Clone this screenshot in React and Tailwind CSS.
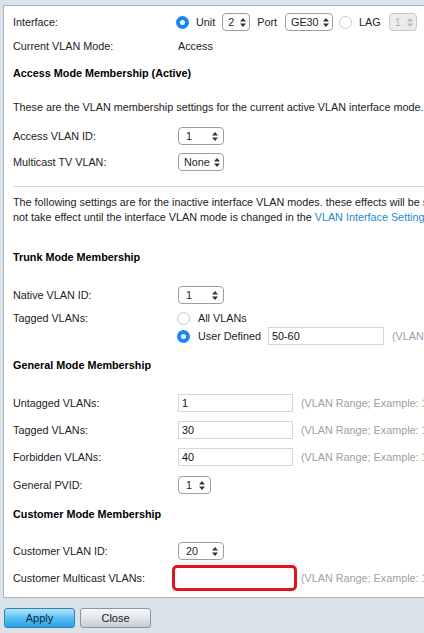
import React from "react";

const font = { fontFamily: '"Liberation Sans", Arial, sans-serif' };

function Arrows({ color = "#333" }) {
  return (
    <svg width="6" height="9" viewBox="0 0 6 9" className="shrink-0">
      <path d="M3 0 L6 3.5 L0 3.5 Z" fill={color} />
      <path d="M3 9 L6 5.5 L0 5.5 Z" fill={color} />
    </svg>
  );
}

function Select({ value, w, disabled, tight }) {
  return (
    <div
      className={
        "flex items-center justify-between h-[18px] rounded-[4px] border " +
        (tight ? "pl-[5px] pr-[3px] " : "pl-[7px] pr-[5px] ") +
        (disabled
          ? "bg-[#ececec] border-[#c8c8c8] text-[#b5b5b5]"
          : "bg-white border-[#9e9e9e] text-[#1e1e1e]")
      }
      style={{ width: w }}
    >
      <span>{value}</span>
      <Arrows color={disabled ? "#b8b8b8" : "#333"} />
    </div>
  );
}

function Radio({ on }) {
  return on ? (
    <div className="w-[13px] h-[13px] rounded-full bg-[#1b86f2] flex items-center justify-center shrink-0">
      <div className="w-[5px] h-[5px] rounded-full bg-white" />
    </div>
  ) : (
    <div className="w-[13px] h-[13px] rounded-full bg-white border border-[#c9c9c9] shrink-0" />
  );
}

function TextInput({ value, w = 115 }) {
  return (
    <div
      className="h-[18px] border border-[#d6d6d6] bg-white flex items-center pl-[3px] text-[#111]"
      style={{ width: w }}
    >
      {value}
    </div>
  );
}

function Row({ label, children, className = "" }) {
  return (
    <div className={"flex items-center h-[20px] " + className}>
      <div className="w-[165px] shrink-0">{label}</div>
      <div className="flex items-center">{children}</div>
    </div>
  );
}

const Hint = () => (
  <span className="ml-[8px] text-[#a0a0a0]">(VLAN Range; Example: 1,3,5-10)</span>
);

export default function App() {
  return (
    <div
      className="w-[424px] h-[633px] bg-[#dbe3ea] overflow-hidden pt-[5px] pl-[3px] text-[10.8px] text-[#222] whitespace-nowrap"
      style={font}
    >
      <div className="w-[700px] h-[593px] bg-white border border-[#a8b3bd] pl-[9px]">
        <Row label="Interface:" className="mt-[6px]">
          <div className="flex items-center -ml-[2px]">
            <Radio on />
            <span className="ml-[7px]">Unit</span>
            <div className="ml-[7px]">
              <Select value="2" w={28} tight />
            </div>
            <span className="ml-[7px]">Port</span>
            <div className="ml-[8px]">
              <Select value="GE30" w={48} tight />
            </div>
            <div className="ml-[6px]">
              <Radio />
            </div>
            <span className="ml-[7px]">LAG</span>
            <div className="ml-[8px]">
              <Select value="1" w={28} disabled tight />
            </div>
          </div>
        </Row>
        <Row label="Current VLAN Mode:" className="mt-[4px]">
          <span>Access</span>
        </Row>
        <div className="h-[20px] mt-[7px] flex items-center font-bold text-black">
          Access Mode Membership (Active)
        </div>
        <div className="h-[20px] mt-[14px] flex items-center">
          These are the VLAN membership settings for the current active VLAN interface mode.
        </div>
        <Row label="Access VLAN ID:" className="mt-[9px]">
          <Select value="1" w={46} />
        </Row>
        <Row label="Multicast TV VLAN:" className="mt-[6px]">
          <Select value="None" w={46} tight />
        </Row>
        <div className="h-px bg-[#d4d4d4] mt-[14px]" />
        <div className="mt-[8px] leading-[15px]">
          The following settings are for the inactive interface VLAN modes. these effects will be saved but will
          <br />
          not take effect until the interface VLAN mode is changed in the{" "}
          <span className="text-[#1d8bd1]">VLAN Interface Settings</span> page.
        </div>
        <div className="h-[20px] mt-[22px] flex items-center font-bold text-black">
          Trunk Mode Membership
        </div>
        <Row label="Native VLAN ID:" className="mt-[18px]">
          <Select value="1" w={46} />
        </Row>
        <div className="flex mt-[4px]">
          <div className="w-[165px] shrink-0 h-[18px] flex items-center">Tagged VLANs:</div>
          <div className="flex flex-col -ml-[1px]">
            <div className="h-[18px] flex items-center">
              <Radio />
              <span className="ml-[8px]">All VLANs</span>
            </div>
            <div className="h-[18px] flex items-center">
              <Radio on />
              <span className="ml-[8px]">User Defined</span>
              <div className="ml-[7px]">
                <TextInput value="50-60" w={116} />
              </div>
              <span className="ml-[8px] text-[#a0a0a0]">(VLAN Range; Example: 1,3,5-10)</span>
            </div>
          </div>
        </div>
        <div className="h-[20px] mt-[10px] flex items-center font-bold text-black">
          General Mode Membership
        </div>
        <Row label="Untagged VLANs:" className="mt-[18px]">
          <TextInput value="1" />
          <Hint />
        </Row>
        <Row label="Tagged VLANs:" className="mt-[7px]">
          <TextInput value="30" />
          <Hint />
        </Row>
        <Row label="Forbidden VLANs:" className="mt-[7px]">
          <TextInput value="40" />
          <Hint />
        </Row>
        <Row label="General PVID:" className="mt-[8px]">
          <Select value="1" w={33} />
        </Row>
        <div className="h-[20px] mt-[9px] flex items-center font-bold text-black">
          Customer Mode Membership
        </div>
        <Row label="Customer VLAN ID:" className="mt-[17px]">
          <Select value="20" w={46} />
        </Row>
        <Row label="Customer Multicast VLANs:" className="mt-[7px]">
          <div className="-ml-[6px] w-[125px] h-[26px] border-[3px] border-[#e3121b] rounded-[5px] bg-white" />
          <span className="ml-[4px] text-[#a0a0a0]">(VLAN Range; Example: 1,3,5-10)</span>
        </Row>
      </div>
      <div className="flex gap-[5px] mt-[10px] ml-[1px]">
        <button
          className="w-[71px] h-[20px] rounded-[3px] border border-[#3b7fae] bg-gradient-to-b from-[#b3e6fc] via-[#55c0f2] to-[#2aa3e3] text-[11px] text-[#13273a] flex items-center justify-center"
          style={font}
        >
          Apply
        </button>
        <button
          className="w-[71px] h-[20px] rounded-[3px] border border-[#8b939b] bg-gradient-to-b from-[#f7f8f9] via-[#e2e6e9] to-[#c6ccd2] text-[11px] text-[#1c1c1c] flex items-center justify-center"
          style={font}
        >
          Close
        </button>
      </div>
    </div>
  );
}
